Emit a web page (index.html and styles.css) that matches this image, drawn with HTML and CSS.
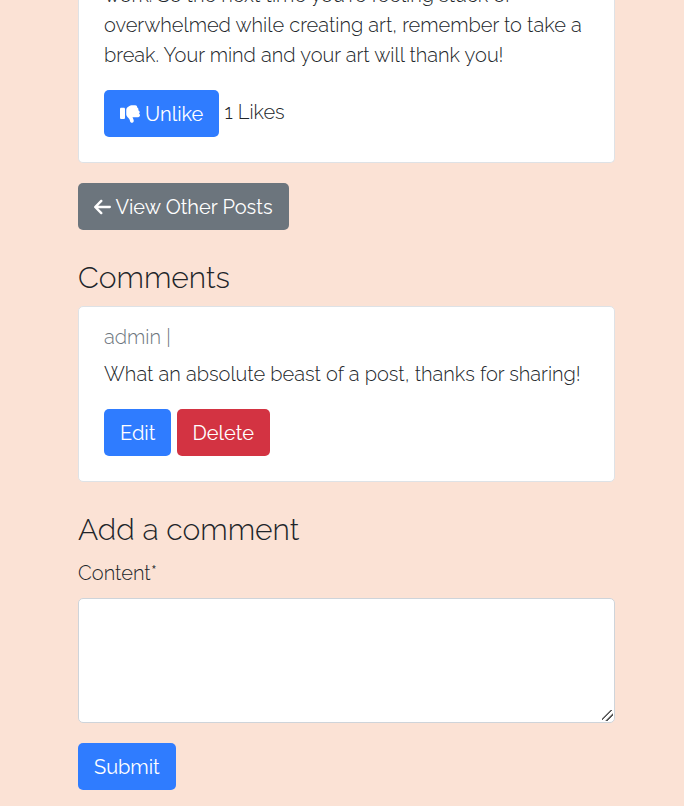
FILE: index.html
```html
<!DOCTYPE html>
<html lang="en">
<head>
<meta charset="utf-8">
<meta name="viewport" content="width=device-width, initial-scale=1">
<title>Blog post</title>
<link rel="stylesheet" href="styles.css">
</head>
<body>
<main class="page">
  <article class="card post">
    <p class="text">work. So the next time you're feeling stuck or<br>overwhelmed while creating art, remember to take a<br>break. Your mind and your art will thank you!</p>
    <div class="actions">
      <button class="btn btn-primary" type="button"><svg class="icon" viewBox="0 0 512 512" aria-hidden="true"><path fill="currentColor" d="M313.4 479.1c26-5.2 42.9-30.5 37.7-56.5l-2.3-11.4c-5.3-26.7-15.1-52.1-28.8-75.2H464c26.5 0 48-21.5 48-48c0-18.5-10.5-34.6-25.9-42.6C497 236.6 504 223.1 504 208c0-23.4-16.8-42.9-38.9-47.1c4.4-7.3 6.9-15.8 6.9-24.9c0-21.3-13.9-39.4-33.1-45.6c.7-3.3 1.1-6.8 1.1-10.4c0-26.5-21.5-48-48-48H294.5c-19 0-37.5 5.6-53.3 16.1L202.7 73.8C176 91.6 160 121.6 160 153.7V264.9c0 29.2 13.3 56.7 36 75l7.4 5.9c26.5 21.2 44.6 51 51.2 84.2l2.3 11.4c5.2 26 30.5 42.9 56.5 37.7zM32 384H96c17.7 0 32-14.3 32-32V128c0-17.7-14.3-32-32-32H32C14.3 96 0 110.3 0 128V352c0 17.7 14.3 32 32 32z"/></svg> Unlike</button>
      <span>1 Likes</span>
    </div>
  </article>

  <a class="btn btn-secondary" href="#"><svg class="icon icon-arrow" viewBox="0 0 448 512" aria-hidden="true"><path fill="currentColor" d="M9.4 233.4c-12.5 12.5-12.5 32.8 0 45.3l160 160c12.5 12.5 32.8 12.5 45.3 0s12.5-32.8 0-45.3L109.2 288 416 288c17.7 0 32-14.3 32-32s-14.3-32-32-32l-306.7 0L214.6 118.6c12.5-12.5 12.5-32.8 0-45.3s-32.8-12.5-45.3 0l-160 160z"/></svg> View Other Posts</a>

  <section class="section">
    <h2 class="title">Comments</h2>
    <article class="card comment">
      <p class="author">admin |</p>
      <p class="text">What an absolute beast of a post, thanks for sharing!</p>
      <div class="actions">
        <button class="btn btn-primary" type="button">Edit</button>
        <button class="btn btn-danger" type="button">Delete</button>
      </div>
    </article>
  </section>

  <section class="section">
    <h2 class="title">Add a comment</h2>
    <form class="form">
      <label for="content">Content*</label>
      <textarea class="field" id="content" name="content"></textarea>
      <button class="btn btn-primary" type="submit">Submit</button>
    </form>
  </section>
</main>
</body>
</html>
```
FILE: styles.css
```css
* {
  box-sizing: border-box;
}

html {
  background: #fbe2d5;
}

body {
  margin: 0;
  color: #212529;
  font-family: Raleway, Lato, "Open Sans", sans-serif;
  font-size: 20px;
  font-weight: 300;
  line-height: 30px;
}

/* The page starts part-way down the post. */
.page {
  margin-top: -20px;
  padding: 0 69px 16px 78px;
}

.card {
  padding: 15px 25px 25px;
  background: #fff;
  border: 1px solid #dee2e6;
  border-radius: 5px;
}

.post {
  margin-bottom: 20px;
  padding-top: 0;
  border-top: 0;
  border-radius: 0 0 5px 5px;
}

.text {
  margin: 0 0 20px;
}

.author {
  margin: 0 0 7px;
  color: #6c757d;
}

.btn {
  display: inline-block;
  padding: 9px 16px 8px;
  border: 0;
  border-radius: 5px;
  color: #fff;
  font: inherit;
  font-weight: 400;
  text-decoration: none;
  vertical-align: middle;
}

.btn-primary {
  background: #2f7cff;
}

.btn-secondary {
  background: #6c757d;
}

.btn-danger {
  background: #d33342;
}

.icon {
  width: 20px;
  height: 20px;
  vertical-align: -3px;
}

.icon-arrow {
  width: 17px;
}

.section {
  margin-top: 30px;
}

.title {
  margin: 0 0 10px;
  font-size: 30px;
  font-weight: inherit;
  line-height: 36px;
}

.form {
  display: flex;
  flex-direction: column;
  align-items: flex-start;
}

.field {
  width: 100%;
  height: 125px;
  margin: 10px 0 20px;
  padding: 7px 15px;
  border: 1px solid #ced4da;
  border-radius: 5px;
  background: #fff;
  color: inherit;
  font: inherit;
  resize: vertical;
}

.field::-webkit-resizer {
  background: linear-gradient(315deg, transparent 4px, #555 4px 5px, transparent 6px 8px, #555 8px 9px, transparent 10px) 3px 3px / 11px 11px no-repeat;
}
```
